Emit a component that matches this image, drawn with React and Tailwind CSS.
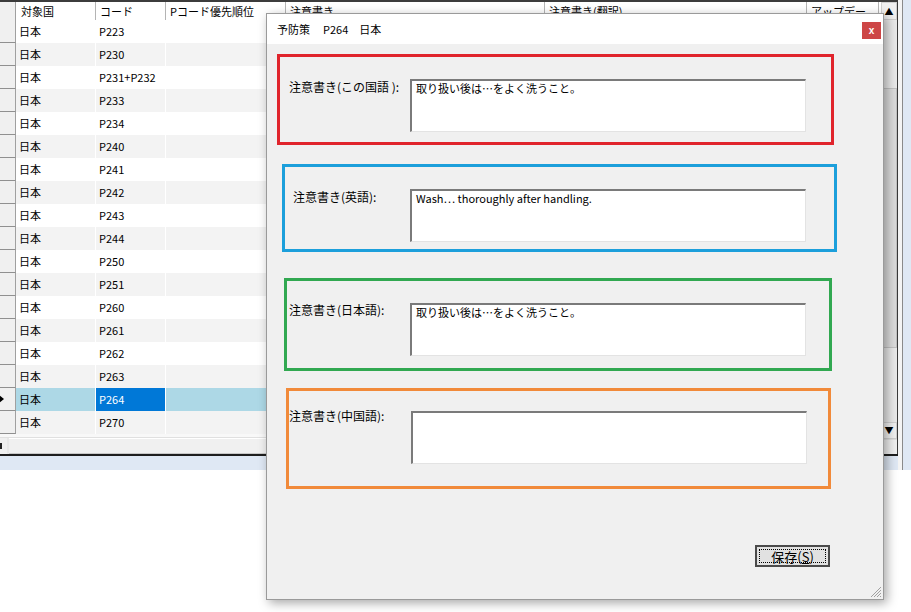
import React from 'react';

const codes = ['P223','P230','P231+P232','P233','P234','P240','P241','P242','P243','P244','P250','P251','P260','P261','P262','P263','P264','P270'];

function Row({ code, i }) {
  const sel = code === 'P264';
  const bg = sel ? 'bg-[#add8e6]' : i % 2 ? 'bg-[#f3f3f3]' : 'bg-white';
  return (
    <div className="flex h-[23px]">
      <div className="relative w-[16px] shrink-0 bg-[#f0f0f0] border-r border-b border-r-[#a0a0a0] border-b-[#909090]">
        {sel && (
          <svg className="absolute left-0 top-[7px]" width="5" height="8" viewBox="0 0 5 8">
            <polygon points="-1,0 4,4 -1,8" fill="#000" />
          </svg>
        )}
      </div>
      <div className={`flex flex-1 ${bg}`}>
        <div className="w-[80px] shrink-0 border-r border-white pl-[3px] flex items-center">日本</div>
        <div className={`w-[70px] shrink-0 border-r border-white pl-[3px] flex items-center ${sel ? 'bg-[#0078d7] text-white' : ''}`}>{code}</div>
        <div className="w-[120px] shrink-0 border-r border-white"></div>
        <div className="w-[259px] shrink-0 border-r border-white"></div>
        <div className="w-[262px] shrink-0 border-r border-white"></div>
        <div className="flex-1"></div>
      </div>
    </div>
  );
}

function Box({ color, wrap, pad, labelW, labelMt, label, text }) {
  return (
    <div className={`border-[3px] flex items-start ${color} ${wrap} ${pad}`}>
      <div className={`shrink-0 leading-[16px] text-[12px] ${labelW} ${labelMt}`}>{label}</div>
      <div className="w-[396px] h-[53px] shrink-0 bg-white border-t-2 border-l-2 border-t-[#7a7a7a] border-l-[#7a7a7a] border-r border-b border-r-[#e3e3e3] border-b-[#e3e3e3] pl-[4px] pt-[1px] text-[11px] leading-[12px]">
        {text}
      </div>
    </div>
  );
}

export default function App() {
  return (
    <div className="relative w-[911px] h-[612px] overflow-hidden bg-white text-black font-['Noto_Sans_CJK_JP','Noto_Sans',sans-serif] text-[12px]">
      {/* background form */}
      <div className="h-[470px] bg-[#dfe8f4] flex text-[11px]">
        <div className="w-[898px] h-[456px] flex border-r border-[#3a3a3a] bg-white">
          <div className="w-[881px] flex flex-col">
            <div className="h-[20px] flex border-t-2 border-[#3c3c3c] bg-white">
              <div className="w-[16px] shrink-0 bg-[#f0f0f0] border-r border-[#a0a0a0]"></div>
              <div className="w-[80px] shrink-0 border-r border-[#b4b4b4] pl-[5px] flex items-center">対象国</div>
              <div className="w-[70px] shrink-0 border-r border-[#b4b4b4] pl-[4px] flex items-center">コード</div>
              <div className="w-[120px] shrink-0 border-r border-[#b4b4b4] pl-[4px] flex items-center">Pコード優先順位</div>
              <div className="w-[259px] shrink-0 border-r border-[#b4b4b4] pl-[4px] flex items-center">注意書き</div>
              <div className="w-[262px] shrink-0 border-r border-[#b4b4b4] pl-[4px] flex items-center">注意書き(翻訳)</div>
              <div className="w-[72px] shrink-0 border-r border-[#b4b4b4] pl-[4px] flex items-center whitespace-nowrap overflow-hidden">アップデー</div>
            </div>
            {codes.map((c, i) => <Row key={c} code={c} i={i} />)}
            <div className="h-[3px] bg-[#f8f8f8]"></div>
            <div className="h-[17px] flex bg-[#f0f0f0] border-t border-[#e0e0e0]">
              <div className="w-[9px] shrink-0 border-r-2 border-[#e8e8e8] flex items-center">
                <div className="w-[2px] h-[6px] bg-[#222]"></div>
              </div>
              <div className="flex-1 bg-[#f0f0f0] border-t border-white border-b border-b-[#c8c8c8]"></div>
            </div>
          </div>
          <div className="w-[16px] shrink-0 flex flex-col border-t-2 border-[#3c3c3c]">
            <div className="h-[18px] bg-[#f0f0f0] border border-[#d0d0d0] flex items-center justify-center text-[9px] leading-none">▲</div>
            <div className="h-[68px] bg-[#e9e9e9]"></div>
            <div className="h-[260px] bg-[#dcdcdc] border border-[#c2c2c2]"></div>
            <div className="flex-1 bg-[#e9e9e9]"></div>
            <div className="h-[17px] bg-[#f0f0f0] border border-[#d0d0d0] flex items-center justify-center text-[9px] leading-none">▼</div>
            <div className="h-[17px] bg-[#f0f0f0] border-t border-[#e0e0e0]"></div>
          </div>
        </div>
        <div className="w-[4px] h-[470px] bg-[#f4f4f4]"></div>
        <div className="w-[1px] h-[470px] bg-[#8a8a8a]"></div>
      </div>
      <div className="absolute left-0 top-[454px] w-[898px] h-[2px] bg-[#1e1e1e]"></div>

      {/* dialog */}
      <div className="absolute left-[266px] top-[13px] w-[618px] h-[587px] flex flex-col bg-white border border-[#9a9a9a] shadow-[3px_3px_10px_rgba(0,0,0,0.35)]">
        <div className="h-[30px] shrink-0 flex justify-between bg-white">
          <div className="self-center pl-[10px] text-[11px] flex">
            <span>予防策</span>
            <span className="ml-[13px]">P264</span>
            <span className="ml-[11px]">日本</span>
          </div>
          <div className="mt-[8px] mr-[2px] w-[19px] h-[17px] bg-[#cd4646] text-white text-[10px] font-bold leading-none flex items-center justify-center font-['Liberation_Sans',sans-serif]">x</div>
        </div>
        <div className="relative flex-1 bg-[#f0f0f0] flex flex-col">
          <Box color="border-[#e0242c]" wrap="ml-[10px] mt-[10px] w-[557px] h-[91px]" pad="pt-[22px] pl-[9px]" labelW="w-[121px]" labelMt="mt-0" label="注意書き(この国語 ):" text="取り扱い後は…をよく洗うこと。" />
          <Box color="border-[#1c9fdb]" wrap="ml-[15px] mt-[19px] w-[555px] h-[88px]" pad="pt-[22px] pl-[8px]" labelW="w-[117px]" labelMt="mt-0" label="注意書き(英語):" text="Wash… thoroughly after handling." />
          <Box color="border-[#31a851]" wrap="ml-[17px] mt-[26px] w-[548px] h-[93px]" pad="pt-[22px] pl-[2px]" labelW="w-[121px]" labelMt="mt-[-1px]" label="注意書き(日本語):" text="取り扱い後は…をよく洗うこと。" />
          <Box color="border-[#f18a3a]" wrap="ml-[19px] mt-[17px] w-[545px] h-[101px]" pad="pt-[20px] pl-0" labelW="w-[122px]" labelMt="mt-[-3px]" label="注意書き(中国語):" text="" />
          <div className="self-end mr-[53px] mt-[56px] w-[75px] h-[22px] border-2 border-[#4a4a4a] bg-[#e1e1e1] p-[2px]">
            <div className="w-full h-full border border-dotted border-black flex items-center justify-center text-[13px] leading-none">
              保存(<span className="underline">S</span>)
            </div>
          </div>
          <svg className="absolute right-[1px] bottom-[1px]" width="13" height="13" viewBox="0 0 13 13">
            <line x1="12" y1="2" x2="2" y2="12" stroke="#a0a0a0" strokeWidth="1" />
            <line x1="12" y1="5" x2="5" y2="12" stroke="#a0a0a0" strokeWidth="1" />
            <line x1="12" y1="8" x2="8" y2="12" stroke="#a0a0a0" strokeWidth="1" />
            <line x1="12" y1="11" x2="11" y2="12" stroke="#a0a0a0" strokeWidth="1" />
          </svg>
        </div>
      </div>
    </div>
  );
}
